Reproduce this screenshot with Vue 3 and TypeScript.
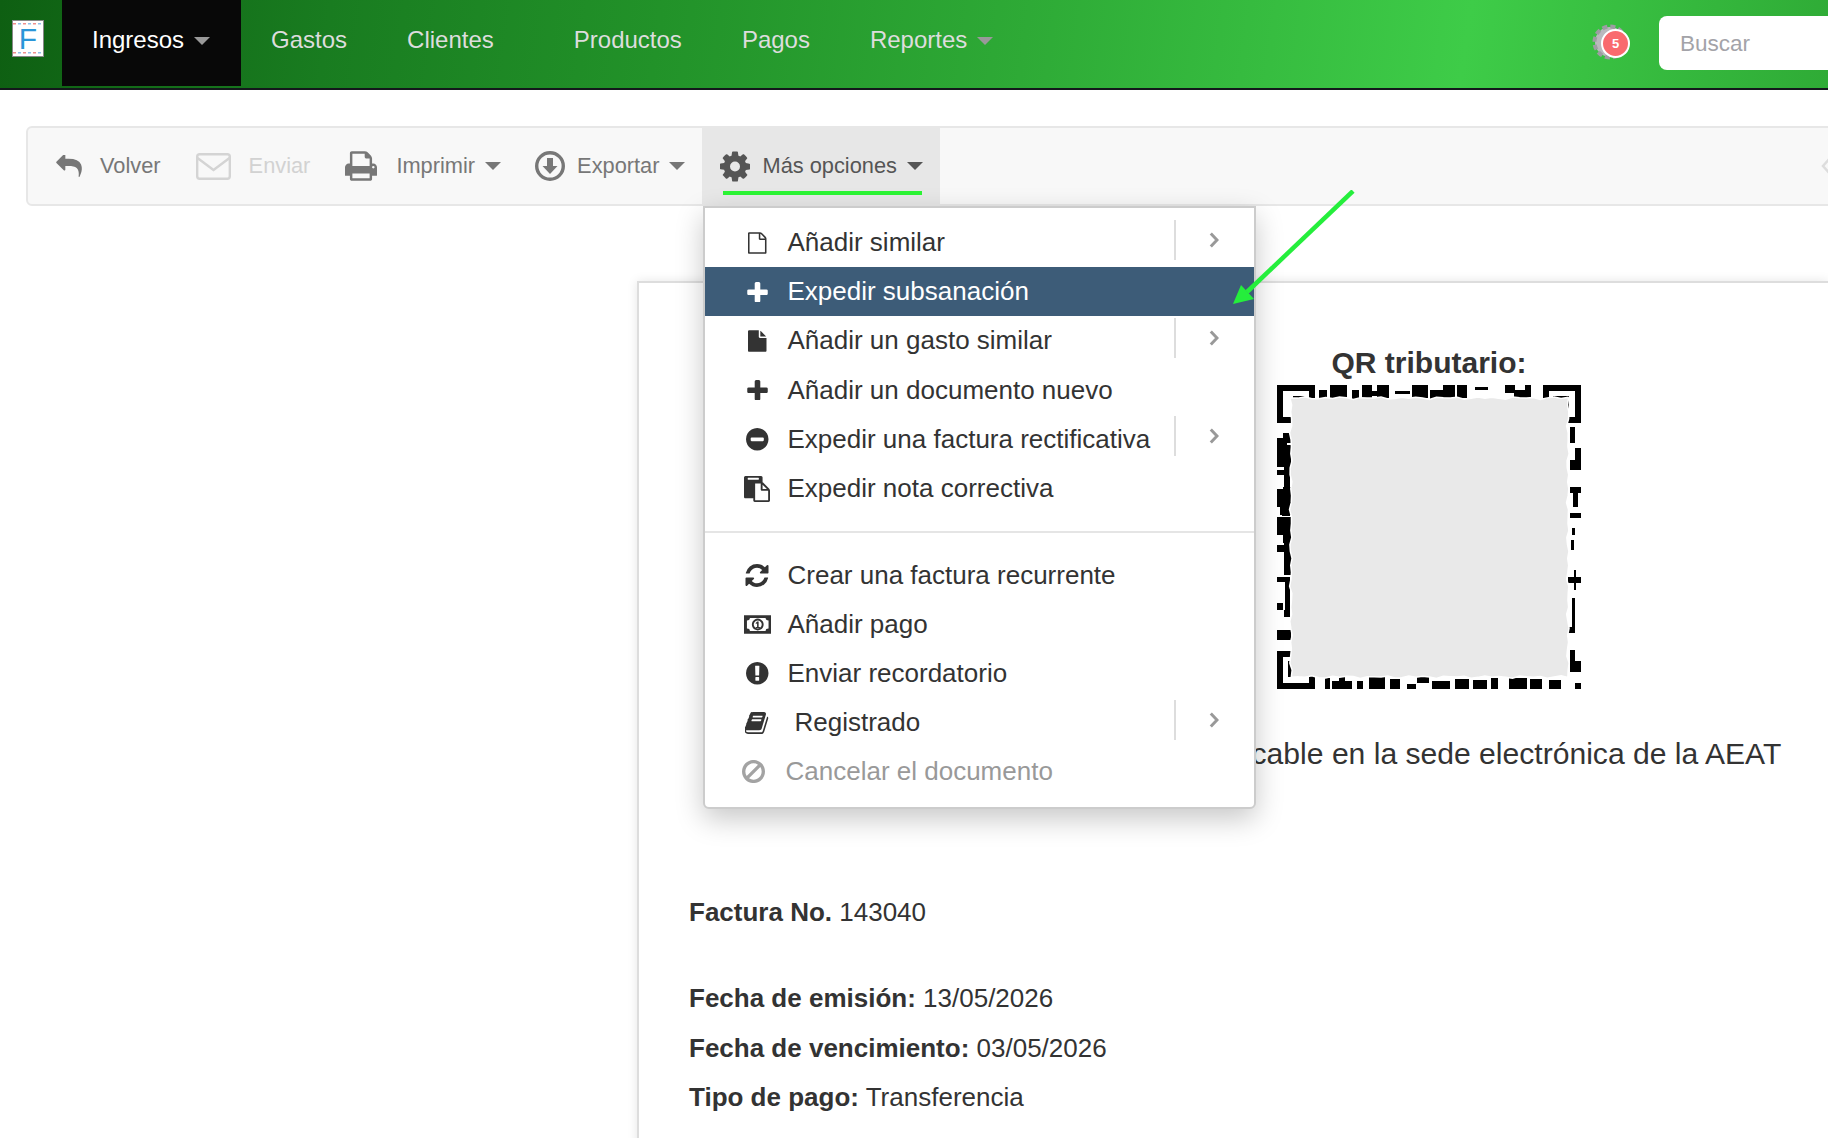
<script setup lang="ts">
interface Icon {
  vb: string
  d: string
  w: number
  h: number
}

interface MenuItem {
  label: string
  icon: Icon
  sub?: boolean
  active?: boolean
  disabled?: boolean
  wide?: boolean
}

const fileO: Icon = { vb: '128 0 1536 1792', w: 18.5, h: 22, d: 'M1596 380q28 28 48 76t20 88v1152q0 40-28 68t-68 28h-1344q-40 0-68-28t-28-68v-1600q0-40 28-68t68-28h896q40 0 88 20t76 48zm-444-244v376h376q-10-29-22-41l-313-313q-12-12-41-22zm384 1528v-1024h-416q-40 0-68-28t-28-68v-416h-768v1536h1280z' }
const file: Icon = { vb: '128 0 1536 1792', w: 18.5, h: 22, d: 'M1152 512v-472q22 14 36 28l408 408q14 14 28 36h-472zm-128 32q0 40 28 68t68 28h544v1056q0 40-28 68t-68 28h-1344q-40 0-68-28t-28-68v-1600q0-40 28-68t68-28h800v544z' }
const plus: Icon = { vb: '192 128 1408 1408', w: 21, h: 20.5, d: 'M1600 736v192q0 40-28 68t-68 28h-416v416q0 40-28 68t-68 28h-192q-40 0-68-28t-28-68v-416h-416q-40 0-68-28t-28-68v-192q0-40 28-68t68-28h416v-416q0-40 28-68t68-28h192q40 0 68 28t28 68v416h416q40 0 68 28t28 68z' }
const minus: Icon = { vb: '128 128 1536 1536', w: 22.5, h: 22.5, d: 'M1344 960v-128q0-26-19-45t-45-19h-768q-26 0-45 19t-19 45v128q0 26 19 45t45 19h768q26 0 45-19t19-45zm320-64q0 209-103 385.5t-279.5 279.5-385.5 103-385.5-103-279.5-279.5-103-385.5 103-385.5 279.5-279.5 385.5-103 385.5 103 279.5 279.5 103 385.5z' }
const clipboard: Icon = { vb: '0 0 1792 1792', w: 26, h: 26, d: 'M768 1664h896v-640h-416q-40 0-68-28t-28-68v-416h-384v1152zm256-1440v-64q0-13-9.5-22.5t-22.5-9.5h-704q-13 0-22.5 9.5t-9.5 22.5v64q0 13 9.5 22.5t22.5 9.5h704q13 0 22.5-9.5t9.5-22.5zm256 672h299l-299-299v299zm512 128v672q0 40-28 68t-68 28h-960q-40 0-68-28t-28-68v-160h-544q-40 0-68-28t-28-68v-1344q0-40 28-68t68-28h1088q40 0 68 28t28 68v328q21 13 36 28l408 408q28 28 48 76t20 88z' }
const refresh: Icon = { vb: '128 128 1536 1536', w: 24, h: 23, d: 'M1639 1056q0 5-1 7-64 268-268 434.5t-478 166.5q-146 0-282.5-55t-243.5-157l-129 129q-19 19-45 19t-45-19-19-45v-448q0-26 19-45t45-19h448q26 0 45 19t19 45-19 45l-137 137q71 66 161 102t187 36q134 0 250-65t186-179q11-17 53-117 8-23 30-23h192q13 0 22.5 9.5t9.5 22.5zm25-800v448q0 26-19 45t-45 19h-448q-26 0-45-19t-19-45 19-45l138-138q-148-137-349-137-134 0-250 65t-186 179q-11 17-53 117-8 23-30 23h-199q-13 0-22.5-9.5t-9.5-22.5v-7q65-268 270-434.5t480-166.5q146 0 284 55.5t245 156.5l130-129q19-19 45-19t45 19 19 45z' }
const money: Icon = { vb: '0 0 28 19', w: 27.5, h: 19, d: 'M0 0h28v19h-28zM6 3q0 2.5-3 2.5v8q3 0 3 2.5h16q0-2.5 3-2.5v-8q-3 0-3-2.5zM14 3.5a6 6 0 1 0 .01 0zM14 5.5a4 4 0 1 1-.01 0zM13.3 6.5h1.6v5.5h1.3v1h-4.2v-1h1.3v-3.8l-1 .7-.5-.8z' }
const exclamation: Icon = { vb: '128 128 1536 1536', w: 22.5, h: 22.5, d: 'M896 128q209 0 385.5 103t279.5 279.5 103 385.5-103 385.5-279.5 279.5-385.5 103-385.5-103-279.5-279.5-103-385.5 103-385.5 279.5-279.5 385.5-103zm128 1247v-190q0-14-9-23.5t-22-9.5h-192q-13 0-23 10t-10 23v190q0 13 10 23t23 10h192q13 0 22-9.5t9-23.5zm-2-344l18-621q0-12-10-18-10-8-24-8h-220q-14 0-24 8-10 6-10 18l17 621q0 10 10 17.5t24 7.5h185q14 0 23.5-7.5t10.5-17.5z' }
const book: Icon = { vb: '80 128 1600 1536', w: 24, h: 22, d: 'M1639 478q40 57 18 129l-275 906q-19 64-76.5 107.5t-122.5 43.5h-923q-77 0-148.5-53.5t-99.5-131.5q-24-67-2-127 0-4 3-27t4-37q1-8-3-21.5t-3-19.5q2-11 8-21t16.5-23.5 16.5-23.5q23-38 45-91.5t30-91.5q3-10 .5-30t-.5-28q3-11 17-28t17-23q21-36 42-92t25-90q1-9-2.5-32t.5-28q4-13 22-30.5t22-22.5q19-26 42.5-84.5t27.5-96.5q1-8-3-25.5t-2-26.5q2-8 9-18t18-23 17-21q8-12 16.5-30.5t15-35 16-36 19.5-32 26.5-23.5 36-11.5 47.5 5.5l-1 3q38-9 51-9h761q74 0 114 56t18 130l-274 906q-36 119-71.5 153.5t-128.5 34.5h-869q-27 0-38 15-11 16-1 43 24 70 144 70h923q29 0 56-15.5t35-41.5l300-987q7-22 5-57 38 15 59 43zm-1064 2q-4 13 2 22.5t20 9.5h608q13 0 25.5-9.5t16.5-22.5l21-64q4-13-2-22.5t-20-9.5h-608q-13 0-25.5 9.5t-16.5 22.5zm-83 256q-4 13 2 22.5t20 9.5h608q13 0 25.5-9.5t16.5-22.5l21-64q4-13-2-22.5t-20-9.5h-608q-13 0-25.5 9.5t-16.5 22.5z' }
const ban: Icon = { vb: '128 125 1536 1536', w: 23, h: 23, d: 'M1440 893q0-161-87-295l-754 753q137 89 297 89 111 0 211.5-43.5t173.5-116.5 116-174.5 43-212.5zm-999 299l755-754q-135-91-300-91-148 0-273 73t-198 199-73 274q0 162 89 299zm1223-299q0 157-61 300t-163.5 246-245 164-298.5 61-298.5-61-245-164-163.5-246-61-300 61-299.5 163.5-245.5 245-164 298.5-61 298.5 61 245 164 163.5 245.5 61 299.5z' }

const topItems: MenuItem[] = [
  { label: 'Añadir similar', icon: fileO, sub: true },
  { label: 'Expedir subsanación', icon: plus, active: true },
  { label: 'Añadir un gasto similar', icon: file, sub: true },
  { label: 'Añadir un documento nuevo', icon: plus },
  { label: 'Expedir una factura rectificativa', icon: minus, sub: true },
  { label: 'Expedir nota correctiva', icon: clipboard }
]

const bottomItems: MenuItem[] = [
  { label: 'Crear una factura recurrente', icon: refresh },
  { label: 'Añadir pago', icon: money },
  { label: 'Enviar recordatorio', icon: exclamation },
  { label: 'Registrado', icon: book, sub: true, wide: true },
  { label: 'Cancelar el documento', icon: ban, disabled: true }
]

// visible parts of the QR code, the middle is covered by the grey block
const qrRects: number[][] = [
  // finder patterns
  [0, 0, 38, 6], [0, 0, 6, 38], [32, 0, 6, 38], [0, 32, 38, 6], [16, 11, 12, 16],
  [266, 0, 38, 6], [266, 0, 6, 38], [298, 0, 6, 38], [266, 32, 38, 6], [276, 11, 16, 16],
  [0, 266, 38, 6], [0, 266, 6, 38], [32, 266, 6, 38], [0, 298, 38, 6], [11, 276, 16, 16],
  // top
  [42, 5, 8, 10], [53, 0, 17, 13], [75, 5, 7, 10], [85, 0, 10, 13], [100, 0, 12, 13], [92, 6, 10, 5],
  [118, 6, 15, 3], [135, 0, 16, 13], [153, 5, 13, 10], [166, 0, 12, 13], [180, 0, 10, 13],
  [198, 2, 13, 3], [228, 0, 10, 8], [237, 5, 17, 10], [248, 0, 6, 12],
  // right
  [293, 42, 5, 16], [298, 63, 6, 22], [293, 75, 5, 10], [293, 102, 11, 6], [296, 108, 5, 14],
  [293, 128, 11, 5], [295, 143, 3, 7], [294, 155, 3, 10], [291, 192, 13, 6], [297, 185, 2, 20],
  [295, 213, 3, 35], [291, 242, 7, 6], [293, 265, 5, 14], [293, 276, 11, 11],
  // left
  [6, 48, 8, 6], [0, 53, 14, 5], [0, 58, 10, 24], [8, 60, 6, 25], [7, 82, 6, 20], [0, 85, 7, 5], [0, 104, 7, 6],
  [6, 102, 8, 8], [0, 107, 12, 15], [6, 110, 9, 12], [3, 122, 12, 8], [5, 125, 8, 6], [0, 132, 15, 18], [6, 150, 9, 8],
  [0, 160, 7, 7], [7, 152, 8, 30], [7, 182, 7, 8],
  [0, 192, 13, 5], [8, 197, 5, 28], [0, 218, 6, 7], [7, 225, 6, 7], [0, 245, 14, 10],
  // bottom
  [48, 293, 5, 11], [55, 296, 20, 8], [62, 291, 6, 5], [80, 296, 6, 8], [92, 291, 16, 13], [113, 294, 10, 10],
  [130, 299, 9, 5], [140, 291, 12, 7], [155, 296, 18, 8], [178, 294, 14, 10], [196, 295, 14, 9],
  [214, 293, 7, 11], [232, 293, 18, 11], [253, 294, 12, 10], [272, 295, 12, 9], [298, 298, 6, 6]
]

// rough edge of the grey block, fixed wobble so the picture stays the same
const wobble = (i: number) => Math.sin(i * 2.3) * 0.9 + Math.sin(i * 5.1) * 0.6

const blockPath = (() => {
  const pts: string[] = []
  const [x0, y0, x1, y1] = [14, 13, 291, 292]
  for (let i = 0; i <= 40; i++) pts.push(`${x0 + ((x1 - x0) * i) / 40},${y0 + wobble(i)}`)
  for (let i = 0; i <= 40; i++) pts.push(`${x1 + wobble(i + 50)},${y0 + ((y1 - y0) * i) / 40}`)
  for (let i = 40; i >= 0; i--) pts.push(`${x0 + ((x1 - x0) * i) / 40},${y1 + wobble(i + 100)}`)
  for (let i = 40; i >= 0; i--) pts.push(`${x0 + wobble(i + 150)},${y0 + ((y1 - y0) * i) / 40}`)
  return 'M' + pts.join('L') + 'Z'
})()
</script>

<template>
  <div class="page">
    <nav class="navbar">
      <div class="logo"><span class="logo-f">F</span></div>
      <a class="nav-link current">Ingresos<span class="caret"></span></a>
      <a class="nav-link">Gastos</a>
      <a class="nav-link extra">Clientes</a>
      <a class="nav-link">Productos</a>
      <a class="nav-link">Pagos</a>
      <a class="nav-link">Reportes<span class="caret"></span></a>
      <div class="notif">
        <svg width="36" height="36" viewBox="0 0 36 36">
          <circle cx="18" cy="18" r="15" fill="#b9b9bd" />
          <circle cx="18" cy="18" r="15.5" fill="none" stroke="#9d9da2" stroke-width="4" stroke-dasharray="5 3.1" />
        </svg>
        <span class="badge">5</span>
      </div>
      <input class="search" type="text" placeholder="Buscar" />
    </nav>

    <div class="toolbar">
      <a class="tool">
        <svg width="26" height="22" viewBox="0 128 1792 1536"><path d="M1792 1120q0 166-127 451-3 7-10.5 24t-13.5 30-13 22q-12 17-28 17-15 0-23.5-10t-8.5-25q0-9 2.5-26.5t2.5-23.5q5-68 5-123 0-101-17.5-181t-48.5-138.5-80-101-105.5-69.5-133-42.5-154-21.5-175.5-6h-224v256q0 26-19 45t-45 19-45-19l-512-512q-19-19-19-45t19-45l512-512q19-19 45-19t45 19 19 45v256h224q713 0 875 403 53 134 53 333z" /></svg>
        <span>Volver</span>
      </a>
      <a class="tool disabled">
        <svg width="35" height="27" viewBox="0 0 35 27" fill="none" stroke="#d4d4d4" stroke-width="2.4"><rect x="1.2" y="1.2" width="32.6" height="24.6" rx="2.5" /><path d="M1.5 5l16 12 16-12" /></svg>
        <span>Enviar</span>
      </a>
      <a class="tool print">
        <svg width="32" height="30" viewBox="64 128 1664 1536"><path d="M448 1536h896v-256h-896v256zm0-640h896v-384h-160q-40 0-68-28t-28-68v-160h-640v640zm1152 64q0-26-19-45t-45-19-45 19-19 45 19 45 45 19 45-19 19-45zm128 0v416q0 13-9.5 22.5t-22.5 9.5h-224v160q0 40-28 68t-68 28h-960q-40 0-68-28t-28-68v-160h-224q-13 0-22.5-9.5t-9.5-22.5v-416q0-79 56.5-135.5t135.5-56.5h64v-544q0-40 28-68t68-28h672q40 0 88 20t76 48l152 152q28 28 48 76t20 88v256h64q79 0 135.5 56.5t56.5 135.5z" /></svg>
        <span class="tool-label">Imprimir<span class="caret"></span></span>
      </a>
      <a class="tool tight">
        <svg width="30" height="30" viewBox="0 0 30 30"><circle cx="15" cy="15" r="13.3" fill="none" stroke="#777" stroke-width="3.4" /><path d="M12 7h6v8h4.5l-7.5 8-7.5-8h4.5z" /></svg>
        <span class="tool-label">Exportar<span class="caret"></span></span>
      </a>
      <div class="tool tight open">
        <svg width="30" height="31" viewBox="128 128 1536 1536"><path d="M1152 896q0-106-75-181t-181-75-181 75-75 181 75 181 181 75 181-75 75-181zm512-109v222q0 12-8 23t-20 13l-185 28q-19 54-39 91 35 50 107 138 10 12 10 25t-9 23q-27 37-99 108t-94 71q-12 0-26-9l-138-108q-44 23-91 38-16 136-29 186-7 28-36 28h-222q-14 0-24.5-8.5t-11.5-21.5l-28-184q-49-16-90-37l-141 107q-10 9-25 9-14 0-25-11-126-114-165-168-7-10-7-23 0-12 8-23 15-21 51-66.5t54-70.5q-27-50-41-99l-183-27q-13-2-21-12.5t-8-23.5v-222q0-12 8-23t19-13l186-28q14-46 39-92-40-57-107-138-10-12-10-24 0-10 9-23 26-36 98.5-107.5t94.5-71.5q13 0 26 10l138 107q44-23 91-38 16-136 29-186 7-28 36-28h222q14 0 24.5 8.5t11.5 21.5l28 184q49 16 90 37l142-107q9-9 24-9 13 0 25 10 129 119 165 170 7 8 7 22 0 12-8 23-15 21-51 66.5t-54 70.5q26 50 41 98l183 28q13 2 21 12.5t8 23.5z" /></svg>
        <span class="tool-label">Más opciones<span class="caret"></span></span>
        <span class="underline"></span>

        <div class="dropdown">
          <ul class="menu-group">
            <li v-for="item in topItems" :key="item.label" :class="['menu-row', { active: item.active }]">
              <span class="menu-icon"><svg :width="item.icon.w" :height="item.icon.h" :viewBox="item.icon.vb"><path :d="item.icon.d" fill-rule="evenodd" /></svg></span>
              <span class="menu-label">{{ item.label }}</span>
              <span v-if="item.sub" class="menu-sub">
                <svg width="10" height="16" viewBox="0 0 10 16" fill="none" stroke="#999" stroke-width="3"><path d="M1.8 1.5L8 8l-6.2 6.5" /></svg>
              </span>
            </li>
          </ul>
          <div class="divider"></div>
          <ul class="menu-group lower">
            <li v-for="item in bottomItems" :key="item.label" :class="['menu-row', { disabled: item.disabled, wide: item.wide }]">
              <span class="menu-icon"><svg :width="item.icon.w" :height="item.icon.h" :viewBox="item.icon.vb"><path :d="item.icon.d" fill-rule="evenodd" /></svg></span>
              <span class="menu-label">{{ item.label }}</span>
              <span v-if="item.sub" class="menu-sub">
                <svg width="10" height="16" viewBox="0 0 10 16" fill="none" stroke="#999" stroke-width="3"><path d="M1.8 1.5L8 8l-6.2 6.5" /></svg>
              </span>
            </li>
          </ul>
        </div>
      </div>
      <svg class="collapse" width="10" height="18" viewBox="0 0 10 18" fill="none" stroke="#ddd" stroke-width="2.5"><path d="M9 1L2 9l7 8" /></svg>
    </div>

    <!-- hand drawn pointer on top of the screenshot -->
    <svg class="pointer" width="135" height="125" viewBox="0 0 135 125">
      <path d="M121 1L15 102" stroke="#25ee3c" stroke-width="4.5" fill="none" />
      <path d="M1 114L9 95 22 109z" fill="#25ee3c" />
    </svg>

    <section class="paper">
      <div class="qr-block">
        <h3 class="qr-title">QR tributario:</h3>
        <svg class="qr" width="304" height="304" viewBox="0 0 304 304">
          <rect v-for="(r, i) in qrRects" :key="i" :x="r[0]" :y="r[1]" :width="r[2]" :height="r[3]" fill="#000" />
          <path :d="blockPath" fill="#e9e9e9" stroke="#fff" stroke-width="1.5" />
        </svg>
        <p class="qr-note">Factura verificable en la sede electrónica de la AEAT</p>
      </div>
      <p class="field number"><strong>Factura No.</strong> 143040</p>
      <p class="field"><strong>Fecha de emisión:</strong> 13/05/2026</p>
      <p class="field"><strong>Fecha de vencimiento:</strong> 03/05/2026</p>
      <p class="field"><strong>Tipo de pago:</strong> Transferencia</p>
    </section>
  </div>
</template>

<style>
html,
body {
  margin: 0;
  background: #fff;
}
</style>

<style scoped>
.page {
  position: relative;
  height: 100vh;
  overflow: hidden;
  font-family: "Liberation Sans", Arial, sans-serif;
  color: #333;
}

/* Top navbar */
.navbar {
  display: flex;
  align-items: flex-start;
  height: 88px;
  border-bottom: 2px solid #14181c;
  background: linear-gradient(98deg, #0e5f12 0%, #197c20 18%, #229229 36%, #2eaa36 56%, #3ecc48 80%, #2fab36 100%);
  font-size: 24px;
}

.logo {
  flex: none;
  box-sizing: border-box;
  width: 32px;
  height: 37px;
  margin: 20px 18px 0 12px;
  border: 1.5px solid #888;
  display: flex;
  align-items: center;
  justify-content: center;
  background-color: #fff;
  background-image:
    repeating-linear-gradient(90deg, #ef8f8c 0 3px, #fff 3px 5px, #8fc0ea 5px 8px, #fff 8px 10px),
    repeating-linear-gradient(90deg, #ef8f8c 0 3px, #fff 3px 5px, #8fc0ea 5px 8px, #fff 8px 10px);
  background-size: 100% 1.5px;
  background-position: 0 1.5px, 0 31px;
  background-repeat: no-repeat;
}

.logo-f {
  font-size: 30px;
  line-height: 1;
  color: #2a96d8;
}

.nav-link {
  display: flex;
  align-items: center;
  gap: 10px;
  height: 80px;
  padding: 0 30px 6px;
  color: #ddd;
}

.nav-link.extra {
  padding-right: 50px;
}

.nav-link.current {
  padding: 0 31px 6px 30px;
  background: #080808;
  color: #fff;
}

.caret {
  display: inline-block;
  width: 0;
  height: 0;
  border-top: 8px solid currentColor;
  border-left: 8px solid transparent;
  border-right: 8px solid transparent;
}

.nav-link .caret {
  color: #999;
  margin-top: 2px;
}

.notif {
  position: relative;
  width: 36px;
  height: 36px;
  margin: 24px 31px 0 auto;
}

.notif svg {
  display: block;
}

.badge {
  position: absolute;
  left: 9px;
  top: 5px;
  width: 25px;
  height: 25px;
  border: 2px solid #fff;
  border-radius: 50%;
  background: #f96a6e;
  color: #fff;
  font-size: 13px;
  font-weight: 700;
  line-height: 25px;
  text-align: center;
}

.search {
  flex: none;
  box-sizing: border-box;
  width: 220px;
  height: 54px;
  margin: 16px -51px 0 0;
  padding: 2px 21px 0;
  border: 0;
  border-radius: 8px;
  background: #fff;
  font: 22.5px "Liberation Sans", Arial, sans-serif;
  outline: none;
}

.search::placeholder {
  color: #a3a3a8;
  opacity: 1;
}

/* Toolbar */
.toolbar {
  box-sizing: border-box;
  display: flex;
  align-items: stretch;
  width: 1842px;
  height: 80px;
  margin: 36px 0 0 26px;
  padding-left: 11px;
  border: 2px solid #e7e7e7;
  border-radius: 6px;
  background: #f8f8f8;
  font-size: 21.8px;
}

.tool {
  position: relative;
  display: flex;
  align-items: center;
  gap: 18px;
  padding: 0 17px;
  color: #777;
  fill: #777;
}

.tool.print {
  gap: 19px;
  margin-left: 1px;
}

.tool.tight {
  gap: 12px;
}

.tool.disabled {
  margin-left: 1px;
  color: #d2d2d2;
}

.tool-label {
  display: inline-flex;
  align-items: center;
  gap: 10px;
}

.tool.open {
  padding: 0 17px 0 18px;
  background: #e7e7e7;
  color: #555;
  fill: #555;
}

.underline {
  position: absolute;
  left: 21px;
  bottom: 9px;
  width: 199px;
  height: 4px;
  background: #2cf535;
}

.collapse {
  align-self: center;
  margin-left: auto;
  margin-right: 35px;
}

/* Dropdown */
.dropdown {
  position: absolute;
  z-index: 5;
  left: 1px;
  top: 78px;
  box-sizing: border-box;
  width: 553px;
  height: 603px;
  padding: 10px 0 0;
  border: 2px solid #ccc;
  border-radius: 0 0 6px 6px;
  background: #fff;
  box-shadow: 0 10px 28px rgba(0, 0, 0, 0.22);
  font-size: 26px;
  color: #333;
  fill: #333;
}

.menu-group {
  margin: 0;
  padding: 0;
  list-style: none;
}

.menu-row {
  display: flex;
  align-items: center;
  height: 49.2px;
  padding-left: 34px;
}

.lower .menu-row {
  height: 49px;
}

.menu-row.active {
  background: #3d5c78;
  color: #fff;
  fill: #fff;
}

.menu-row.wide .menu-label {
  margin-left: 7px;
}

.menu-row.disabled {
  color: #999;
  fill: #a3a3a3;
}

.menu-row.disabled .menu-icon {
  margin-left: -4px;
}

.menu-row.disabled .menu-label {
  margin-left: 2px;
}

.menu-icon {
  flex: none;
  display: flex;
  align-items: center;
  justify-content: center;
  width: 36px;
  margin-right: 12px;
}

.menu-sub {
  display: flex;
  align-items: center;
  align-self: center;
  height: 40px;
  margin: -6px 0 0 auto;
  padding-left: 33px;
  padding-right: 35px;
  border-left: 2px solid #ddd;
}

.divider {
  height: 2px;
  margin: 18px 0;
  background: #e5e5e5;
}

/* Annotation arrow */
.pointer {
  position: absolute;
  z-index: 6;
  left: 1232px;
  top: 190px;
}

/* Invoice paper */
.paper {
  margin: 75px 0 0 637px;
  padding: 63px 0 200px 50px;
  border-top: 2px solid #ddd;
  border-left: 2px solid #ddd;
  box-shadow: 0 0 10px rgba(0, 0, 0, 0.1);
  font-size: 26px;
}

.qr-block {
  width: 720px;
  margin-left: 380px;
  text-align: center;
}

.qr-title {
  margin: 0 0 5px;
  font-size: 30px;
  line-height: 34px;
}

.qr {
  display: block;
  margin: 0 auto;
}

.qr-note {
  margin: 49px 0 0;
  padding-left: 1px;
  font-size: 30.1px;
  line-height: 32px;
  white-space: nowrap;
}

.field {
  margin: 0;
  line-height: 49.5px;
}

.field.number {
  margin: 118px 0 36.5px;
}
</style>
